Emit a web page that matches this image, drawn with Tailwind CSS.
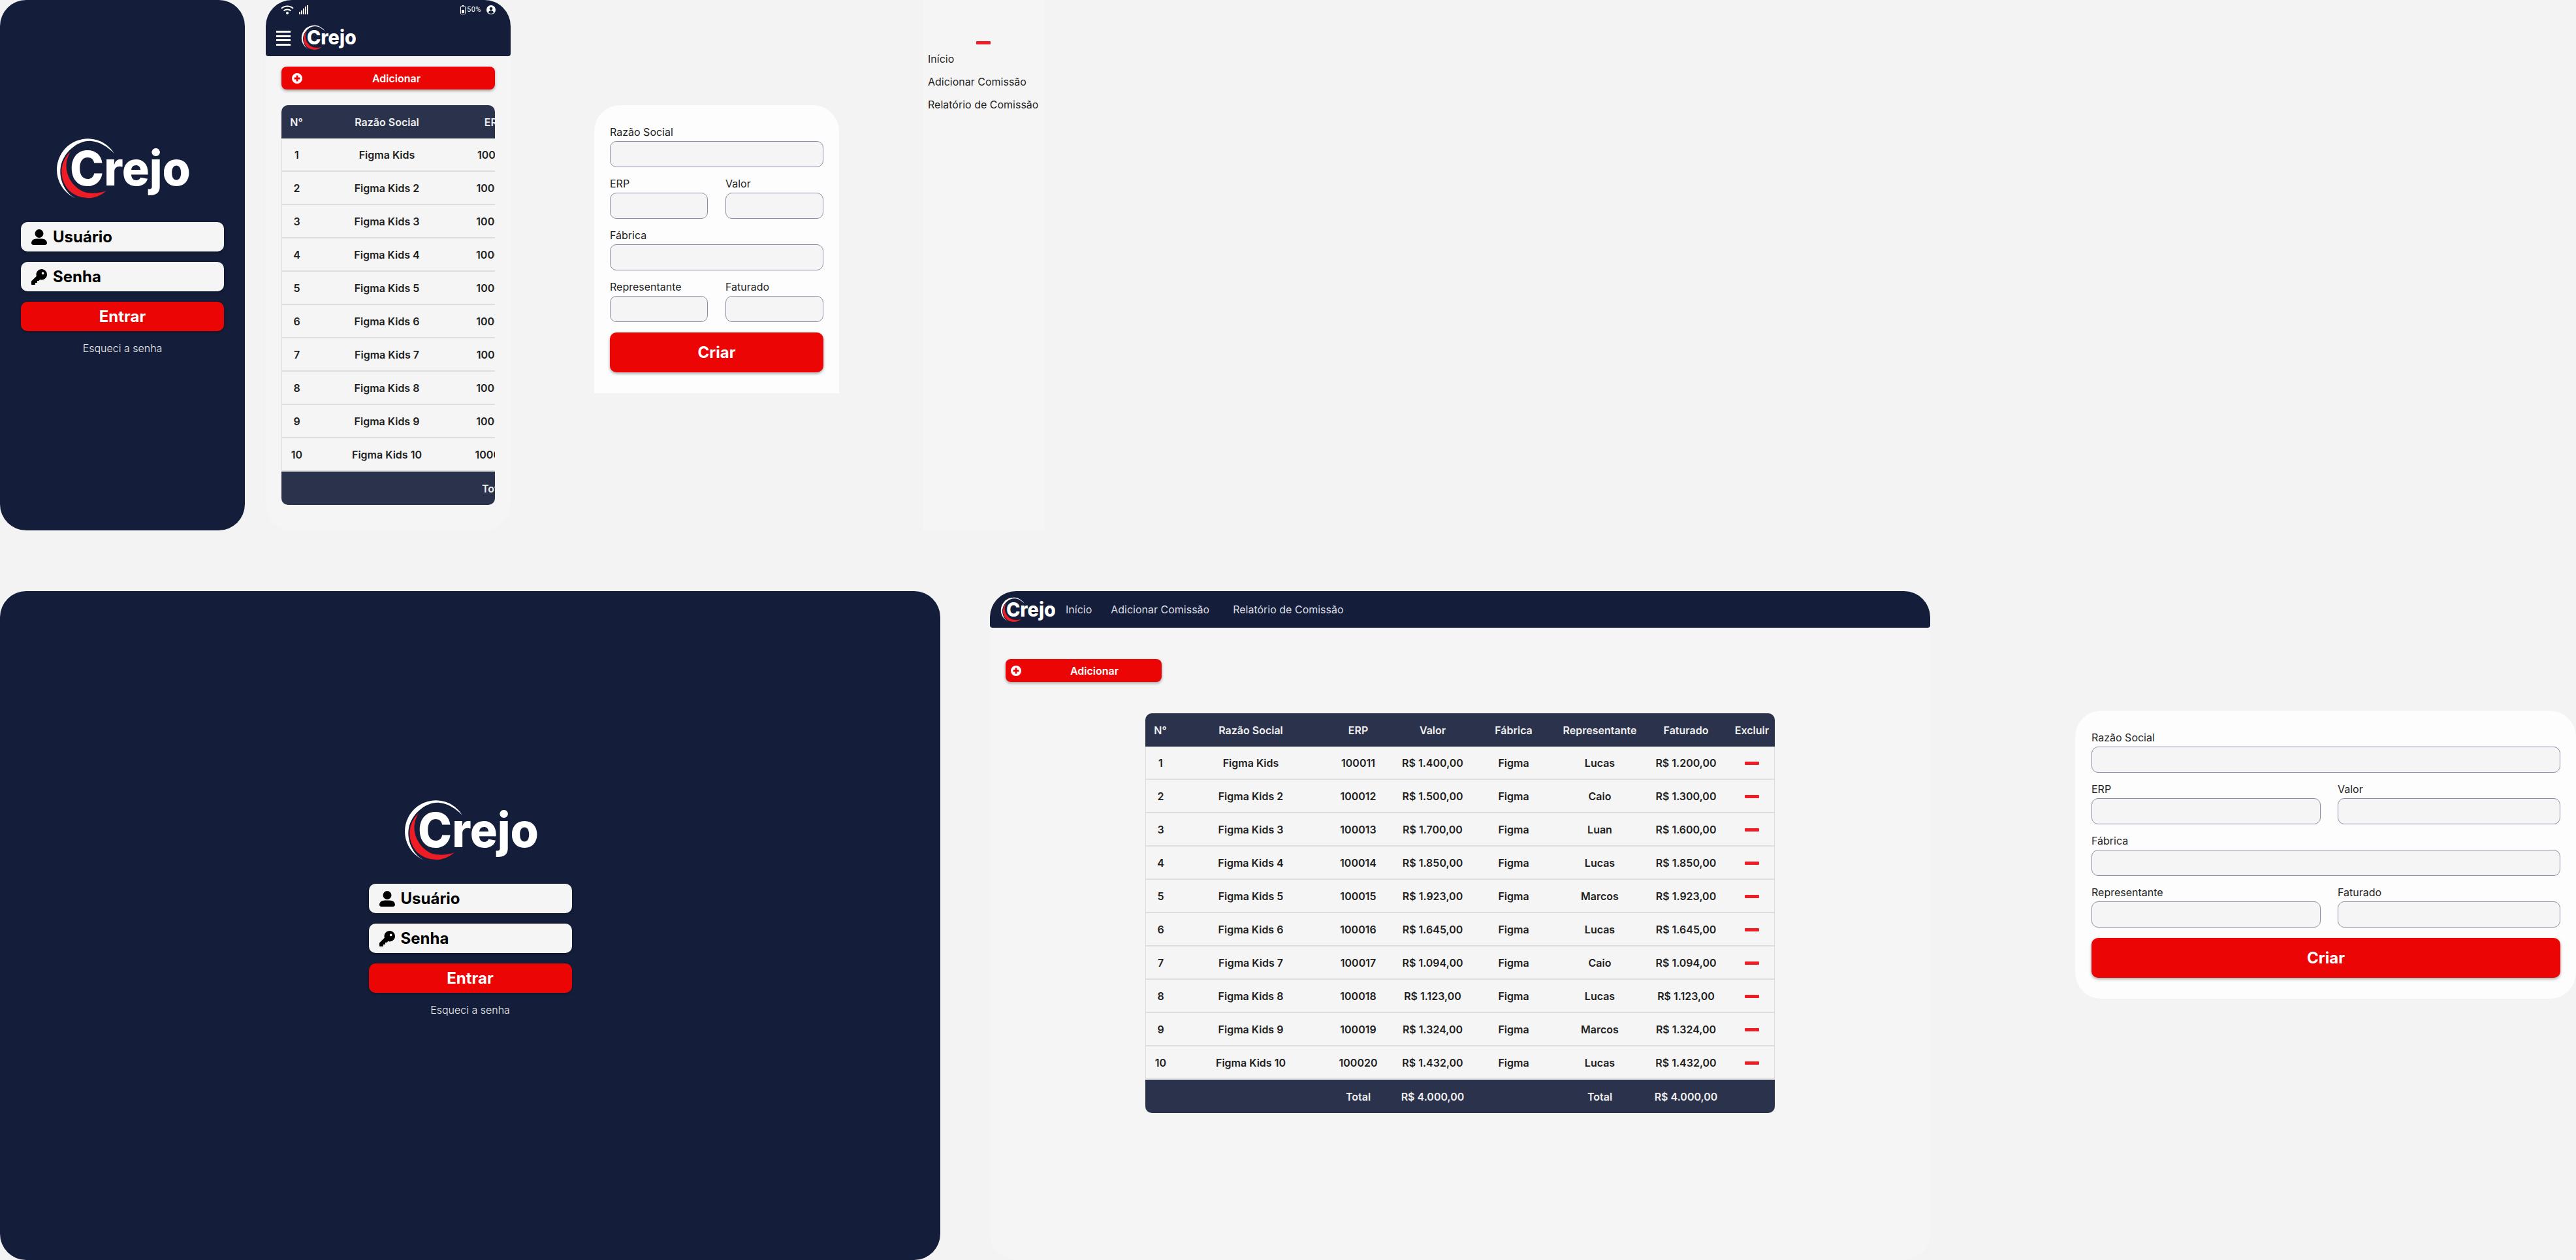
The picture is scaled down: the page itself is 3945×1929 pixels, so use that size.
<!doctype html>
<html>
<head>
  <meta charset="UTF-8">
  <script src="https://cdn.jsdelivr.net/npm/@tailwindcss/browser@4"></script>
</head>
<body class="bg-[#f3f3f3] font-['Inter',sans-serif]">
<!--svg icons used more than once-->
<svg class="hidden">
  <symbol id="icon-user" viewBox="0 0 24 24"><path d="M12 13a6.5 6.5 0 1 0 0-13 6.5 6.5 0 0 0 0 13zM8 14.5h8c4.4 0 8 2.8 8 6.5 0 1.6-1.3 3-3 3H3c-1.7 0-3-1.4-3-3 0-3.7 3.6-6.5 8-6.5z"/></symbol>
  <symbol id="icon-key" viewBox="0 0 512 512"><path d="M336 352c97.2 0 176-78.8 176-176S433.2 0 336 0S160 78.8 160 176c0 18.7 2.9 36.8 8.3 53.7L7 391c-4.5 4.5-7 10.6-7 17v80c0 13.3 10.7 24 24 24h80c13.3 0 24-10.7 24-24V448h40c13.3 0 24-10.7 24-24V384h40c6.4 0 12.5-2.5 17-7l33.3-33.3c16.9 5.4 35 8.3 53.7 8.3zM376 96a40 40 0 1 1 0 80 40 40 0 1 1 0-80z"/></symbol>
  <symbol id="icon-plus" viewBox="0 0 16 16"><path fill-rule="evenodd" d="M8 0a8 8 0 1 0 0 16A8 8 0 0 0 8 0zM6.600 3.600h2.800v3h3v2.800h-3v3H6.600v-3h-3V6.600h3z"/></symbol>
</svg>

<div class="relative w-[3945px] h-[1929px] overflow-hidden">

  <!--Mobile login-->
  <div class="absolute left-0 top-0 w-[375px] h-[812px] rounded-[40px] bg-[#141e3a] flex flex-col items-center pt-[211px]">
    <div data-logo class="w-[205px] h-[94px]"></div>
    <div class="w-[311px] mt-[35px] flex flex-col gap-4">
      <div class="h-[45px] rounded-[10px] bg-[#f5f5f5] shadow-[0_2px_4px_rgba(0,0,0,0.25)] flex items-center pl-4 gap-[9px] text-2xl font-bold text-black">
        <svg class="w-6 h-6"><use href="#icon-user"/></svg>Usuário
      </div>
      <div class="h-[45px] rounded-[10px] bg-[#f5f5f5] shadow-[0_2px_4px_rgba(0,0,0,0.25)] flex items-center pl-4 gap-[9px] text-2xl font-bold text-black">
        <svg class="w-6 h-6"><use href="#icon-key"/></svg>Senha
      </div>
      <div class="h-[45px] rounded-[10px] bg-[#ec0505] shadow-[0_2px_4px_rgba(0,0,0,0.25)] flex items-center justify-center text-2xl font-bold text-white">Entrar</div>
    </div>
    <div class="mt-[14px] text-base leading-6 font-light text-[#eeeeee]">Esqueci a senha</div>
  </div>

  <!--Mobile table page-->
  <div class="absolute left-[407px] top-0 w-[375px] h-[812px] rounded-[40px] bg-[#f5f5f5]">
    <div class="h-[86px] rounded-t-[40px] rounded-b-[4px] bg-[#141e3a] relative">
      <!--status bar-->
      <svg class="absolute left-[23px] top-[8px] w-[20px] h-[14px]" viewBox="0 0 20 14" fill="none" stroke="white" stroke-width="2"><path d="M1 5c5-4.600 13-4.600 18 0"/><path d="M4.500 8.500c3-2.800 8-2.800 11 0"/><circle cx="10" cy="12" r="2" fill="white" stroke="none"/></svg>
      <svg class="absolute left-[51px] top-[8px] w-[14px] h-[14px]" viewBox="0 0 14 14" fill="white"><rect x="0" y="10" width="2" height="4"/><rect x="3" y="8" width="2" height="6"/><rect x="6" y="5" width="2" height="9"/><rect x="9" y="2" width="2" height="12"/><rect x="12" y="0" width="2" height="14"/></svg>
      <svg class="absolute left-[298px] top-[8px] w-[8px] h-[14px]" viewBox="0 0 8 14" fill="none"><rect x="0.500" y="1.500" width="7" height="12" rx="1" stroke="white"/><rect x="2.500" y="0" width="3" height="2" fill="white"/><rect x="2" y="7" width="4" height="5" fill="white"/></svg>
      <span class="absolute left-[308px] top-[8px] font-['Roboto',sans-serif] text-[11px] leading-[14px] tracking-[0.5px] text-white">50%</span>
      <svg class="absolute left-[338px] top-[8px] w-[14px] h-[14px]" viewBox="0 0 14 14"><circle cx="7" cy="7" r="7" fill="white"/><circle cx="7" cy="5.200" r="2.300" fill="#141e3a"/><path d="M2.800 11c.8-2 2.500-3 4.200-3s3.400 1 4.200 3a5.500 5.500 0 0 1-8.400 0z" fill="#141e3a"/></svg>
      <!--nav-->
      <div class="absolute left-[16px] top-[47px] w-[22px] flex flex-col gap-[3.500px]">
        <div class="h-[3px] bg-white"></div><div class="h-[3px] bg-white"></div><div class="h-[3px] bg-white"></div><div class="h-[3px] bg-white"></div>
      </div>
      <div data-logo class="absolute left-[54px] top-[38px] w-[84px] h-[39px]"></div>
    </div>
    <div class="pt-4 px-6">
      <div class="h-[35px] rounded-[8px] bg-[#ec0505] shadow-[0_2px_4px_rgba(0,0,0,0.35)] flex items-center pl-4 text-base font-semibold text-white">
        <svg class="w-4 h-4 fill-white"><use href="#icon-plus"/></svg>
        <span class="flex-1 text-center pr-[7px]">Adicionar</span>
      </div>
      <div data-table class="mt-6 w-[327px] h-[612px] rounded-[10px] overflow-hidden"></div>
    </div>
  </div>

  <!--Mobile form-->
  <div class="absolute left-[910px] top-[161px] w-[375px] h-[441px] rounded-t-[40px] bg-[#fdfdfd] pt-[29px] px-6">
    <div class="grid grid-cols-[150px_150px] gap-x-[27px] gap-y-[13px] text-base text-[#1e1e1e]">
      <label class="col-span-2"><span class="block h-6 leading-6 mb-[2px]">Razão Social</span><input class="block w-full h-10 rounded-[10px] border border-[#8a8ca3] bg-[#f5f5f5]"></label>
      <label><span class="block h-6 leading-6 mb-[2px]">ERP</span><input class="block w-full h-10 rounded-[10px] border border-[#8a8ca3] bg-[#f5f5f5]"></label>
      <label><span class="block h-6 leading-6 mb-[2px]">Valor</span><input class="block w-full h-10 rounded-[10px] border border-[#8a8ca3] bg-[#f5f5f5]"></label>
      <label class="col-span-2"><span class="block h-6 leading-6 mb-[2px]">Fábrica</span><input class="block w-full h-10 rounded-[10px] border border-[#8a8ca3] bg-[#f5f5f5]"></label>
      <label><span class="block h-6 leading-6 mb-[2px]">Representante</span><input class="block w-full h-10 rounded-[10px] border border-[#8a8ca3] bg-[#f5f5f5]"></label>
      <label><span class="block h-6 leading-6 mb-[2px]">Faturado</span><input class="block w-full h-10 rounded-[10px] border border-[#8a8ca3] bg-[#f5f5f5]"></label>
    </div>
    <button class="mt-4 w-[327px] h-[61px] rounded-[10px] bg-[#ec0505] shadow-[0_2px_4px_rgba(0,0,0,0.35)] text-2xl font-bold text-white">Criar</button>
  </div>

  <!--Mobile menu-->
  <div class="absolute left-[1413px] top-0 w-[186px] h-[812px] bg-[#f5f5f5] pl-2 pt-[63px] text-base text-[#1e1e1e]">
    <div class="w-[22px] h-[5px] rounded-[1px] bg-[#ee1c25] ml-[74px]"></div>
    <div class="mt-[10px] flex flex-col gap-[11px] leading-6">
      <div>Início</div>
      <div>Adicionar Comissão</div>
      <div>Relatório de Comissão</div>
    </div>
  </div>

  <!--Desktop login-->
  <div class="absolute left-0 top-[905px] w-[1440px] h-[1024px] rounded-[40px] bg-[#141e3a] flex flex-col items-center pt-[319px]">
    <div data-logo class="w-[205px] h-[94px]"></div>
    <div class="w-[311px] mt-[35px] flex flex-col gap-4">
      <div class="h-[45px] rounded-[10px] bg-[#f5f5f5] shadow-[0_2px_4px_rgba(0,0,0,0.25)] flex items-center pl-4 gap-[9px] text-2xl font-bold text-black">
        <svg class="w-6 h-6"><use href="#icon-user"/></svg>Usuário
      </div>
      <div class="h-[45px] rounded-[10px] bg-[#f5f5f5] shadow-[0_2px_4px_rgba(0,0,0,0.25)] flex items-center pl-4 gap-[9px] text-2xl font-bold text-black">
        <svg class="w-6 h-6"><use href="#icon-key"/></svg>Senha
      </div>
      <div class="h-[45px] rounded-[10px] bg-[#ec0505] shadow-[0_2px_4px_rgba(0,0,0,0.25)] flex items-center justify-center text-2xl font-bold text-white">Entrar</div>
    </div>
    <div class="mt-[14px] text-base leading-6 font-light text-[#eeeeee]">Esqueci a senha</div>
  </div>

  <!--Desktop table page-->
  <div class="absolute left-[1516px] top-[905px] w-[1440px] h-[1024px] rounded-[40px] bg-[#f5f5f5]">
    <div class="h-[56px] rounded-t-[40px] rounded-b-[4px] bg-[#141e3a] flex items-center pl-[16px] text-base text-[#dcdde2]">
      <div data-logo class="w-[84px] h-[39px]"></div>
      <span class="ml-4">Início</span>
      <span class="ml-[29px]">Adicionar Comissão</span>
      <span class="ml-[36px]">Relatório de Comissão</span>
    </div>
    <div class="pt-12 pl-6">
      <div class="w-[239px] h-[35px] rounded-[8px] bg-[#ec0505] shadow-[0_2px_4px_rgba(0,0,0,0.35)] flex items-center pl-2 text-base font-semibold text-white">
        <svg class="w-4 h-4 fill-white"><use href="#icon-plus"/></svg>
        <span class="flex-1 text-center pl-[9px]">Adicionar</span>
      </div>
      <div data-table class="mt-12 ml-[214px] w-[964px] h-[612px] rounded-[10px] overflow-hidden"></div>
    </div>
  </div>

  <!--Desktop form-->
  <div class="absolute left-[3178px] top-[1088px] w-[767px] h-[441px] rounded-[40px] bg-[#fdfdfd] pt-[29px] pl-[25px]">
    <div class="grid grid-cols-[351px_341px] gap-x-[26px] gap-y-[13px] w-[718px] text-base text-[#1e1e1e]">
      <label class="col-span-2"><span class="block h-6 leading-6 mb-[2px]">Razão Social</span><input class="block w-full h-10 rounded-[10px] border border-[#8a8ca3] bg-[#f5f5f5]"></label>
      <label><span class="block h-6 leading-6 mb-[2px]">ERP</span><input class="block w-full h-10 rounded-[10px] border border-[#8a8ca3] bg-[#f5f5f5]"></label>
      <label><span class="block h-6 leading-6 mb-[2px]">Valor</span><input class="block w-full h-10 rounded-[10px] border border-[#8a8ca3] bg-[#f5f5f5]"></label>
      <label class="col-span-2"><span class="block h-6 leading-6 mb-[2px]">Fábrica</span><input class="block w-full h-10 rounded-[10px] border border-[#8a8ca3] bg-[#f5f5f5]"></label>
      <label><span class="block h-6 leading-6 mb-[2px]">Representante</span><input class="block w-full h-10 rounded-[10px] border border-[#8a8ca3] bg-[#f5f5f5]"></label>
      <label><span class="block h-6 leading-6 mb-[2px]">Faturado</span><input class="block w-full h-10 rounded-[10px] border border-[#8a8ca3] bg-[#f5f5f5]"></label>
    </div>
    <button class="mt-4 w-[718px] h-[61px] rounded-[10px] bg-[#ec0505] shadow-[0_2px_4px_rgba(0,0,0,0.35)] text-2xl font-bold text-white">Criar</button>
  </div>
</div>

<script>
  const logo = `
    <svg class="w-full h-full block" viewBox="0 0 205 94">
      <path fill="white" d="M90 24A47.500 47.500 0 1 0 32 93C12 84 5 60 8 44C12 22 35 3 55 5C68 6 80 14 90 24z"/>
      <path fill="#ee1c25" d="M23 21A42 42 0 0 0 20 80A42 42 0 0 0 78 81C66 86 52 85 44 83C26 76 6 50 23 21z"/>
      <text x="22" y="73" fill="white" font-family="Inter" font-weight="800" font-size="73" textLength="185" lengthAdjust="spacingAndGlyphs">Crejo</text>
    </svg>`;
  document.querySelectorAll("[data-logo]").forEach(el => el.innerHTML = logo);

  const rows = [
    ["1", "Figma Kids", "100011", "R$ 1.400,00", "Lucas", "R$ 1.200,00"],
    ["2", "Figma Kids 2", "100012", "R$ 1.500,00", "Caio", "R$ 1.300,00"],
    ["3", "Figma Kids 3", "100013", "R$ 1.700,00", "Luan", "R$ 1.600,00"],
    ["4", "Figma Kids 4", "100014", "R$ 1.850,00", "Lucas", "R$ 1.850,00"],
    ["5", "Figma Kids 5", "100015", "R$ 1.923,00", "Marcos", "R$ 1.923,00"],
    ["6", "Figma Kids 6", "100016", "R$ 1.645,00", "Lucas", "R$ 1.645,00"],
    ["7", "Figma Kids 7", "100017", "R$ 1.094,00", "Caio", "R$ 1.094,00"],
    ["8", "Figma Kids 8", "100018", "R$ 1.123,00", "Lucas", "R$ 1.123,00"],
    ["9", "Figma Kids 9", "100019", "R$ 1.324,00", "Marcos", "R$ 1.324,00"],
    ["10", "Figma Kids 10", "100020", "R$ 1.432,00", "Lucas", "R$ 1.432,00"],
  ];

  function render_table() {
    const body = rows.map(r => `
      <tr class="h-[51px] text-[#1e1e1e]">
        <td class="border-b-2 border-l border-[#dddddd]">${r[0]}</td>
        <td class="border-b-2 border-[#dddddd]">${r[1]}</td>
        <td class="border-b-2 border-[#dddddd]">${r[2]}</td>
        <td class="border-b-2 border-[#dddddd]">${r[3]}</td>
        <td class="border-b-2 border-[#dddddd]">Figma</td>
        <td class="border-b-2 border-[#dddddd]">${r[4]}</td>
        <td class="border-b-2 border-[#dddddd]">${r[5]}</td>
        <td class="border-b-2 border-r border-[#dddddd] pl-[7px] pt-[2px]"><div class="w-[22px] h-[5px] rounded-[1px] bg-[#ee1c25] mx-auto"></div></td>
      </tr>`).join("");
    return `
      <table class="w-[964px] max-w-none table-fixed border-separate border-spacing-0 text-center text-base font-semibold whitespace-nowrap">
        <colgroup><col class="w-[46px]"><col class="w-[231px]"><col class="w-[98px]"><col class="w-[130px]"><col class="w-[118px]"><col class="w-[146px]"><col class="w-[118px]"><col class="w-[77px]"></colgroup>
        <thead class="bg-[#2b324b] text-[#f0f0f0]">
          <tr class="h-[51px]"><th class="font-semibold">N°</th><th class="font-semibold">Razão Social</th><th class="font-semibold">ERP</th><th class="font-semibold">Valor</th><th class="font-semibold">Fábrica</th><th class="font-semibold">Representante</th><th class="font-semibold">Faturado</th><th class="font-semibold pl-[7px]">Excluir</th></tr>
        </thead>
        <tbody>${body}</tbody>
        <tfoot class="bg-[#2b324b] text-[#f0f0f0]">
          <tr class="h-[51px]"><td></td><td></td><td>Total</td><td>R$ 4.000,00</td><td></td><td>Total</td><td>R$ 4.000,00</td><td></td></tr>
        </tfoot>
      </table>`;
  }
  document.querySelectorAll("[data-table]").forEach(el => el.innerHTML = render_table());
</script>
</body>
</html>
